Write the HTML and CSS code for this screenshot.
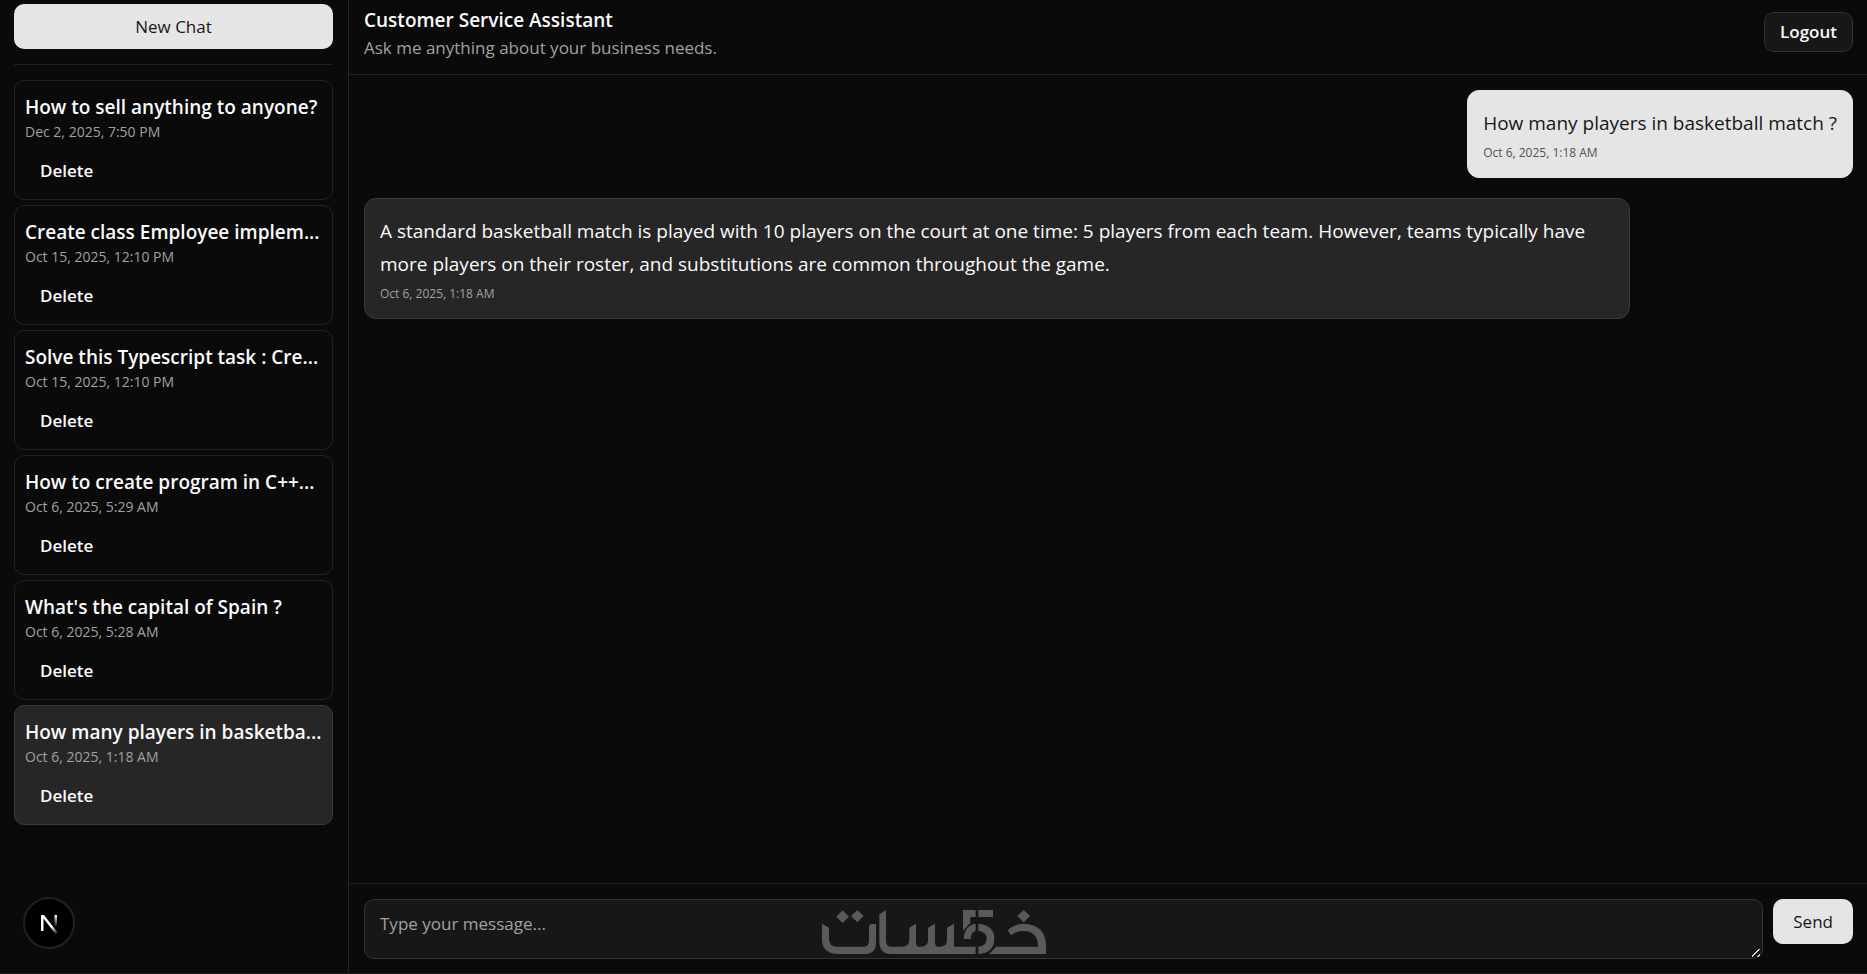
FILE: index.html
```html
<!DOCTYPE html>
<html lang="en">
<head>
<meta charset="utf-8">
<meta name="viewport" content="width=device-width, initial-scale=1">
<title>Customer Service Assistant</title>
<link rel="stylesheet" href="styles.css">
</head>
<body>
<div class="app">
  <aside class="sidebar">
    <div class="sidebar-top">
      <button class="btn btn-primary btn-block" type="button">New Chat</button>
    </div>
    <ul class="chat-list">
      <li class="chat-card">
        <h2 class="chat-title">How to sell anything to anyone?</h2>
        <time class="chat-date">Dec 2, 2025, 7:50 PM</time>
        <button class="btn btn-ghost" type="button">Delete</button>
      </li>
      <li class="chat-card">
        <h2 class="chat-title">Create class Employee implem...</h2>
        <time class="chat-date">Oct 15, 2025, 12:10 PM</time>
        <button class="btn btn-ghost" type="button">Delete</button>
      </li>
      <li class="chat-card">
        <h2 class="chat-title">Solve this Typescript task : Cre...</h2>
        <time class="chat-date">Oct 15, 2025, 12:10 PM</time>
        <button class="btn btn-ghost" type="button">Delete</button>
      </li>
      <li class="chat-card">
        <h2 class="chat-title">How to create program in C++...</h2>
        <time class="chat-date">Oct 6, 2025, 5:29 AM</time>
        <button class="btn btn-ghost" type="button">Delete</button>
      </li>
      <li class="chat-card">
        <h2 class="chat-title">What's the capital of Spain ?</h2>
        <time class="chat-date">Oct 6, 2025, 5:28 AM</time>
        <button class="btn btn-ghost" type="button">Delete</button>
      </li>
      <li class="chat-card is-active">
        <h2 class="chat-title">How many players in basketba...</h2>
        <time class="chat-date">Oct 6, 2025, 1:18 AM</time>
        <button class="btn btn-ghost" type="button">Delete</button>
      </li>
    </ul>
  </aside>

  <main class="main">
    <header class="header">
      <div>
        <h1 class="header-title">Customer Service Assistant</h1>
        <p class="header-sub">Ask me anything about your business needs.</p>
      </div>
      <button class="btn btn-outline" type="button">Logout</button>
    </header>

    <section class="messages" aria-label="Messages">
      <article class="bubble bubble-user">
        <p class="bubble-text">How many players in basketball match ?</p>
        <time class="bubble-time">Oct 6, 2025, 1:18 AM</time>
      </article>
      <article class="bubble bubble-bot">
        <p class="bubble-text">A standard basketball match is played with 10 players on the court at one time: 5 players from each team. However, teams typically have more players on their roster, and substitutions are common throughout the game.</p>
        <time class="bubble-time">Oct 6, 2025, 1:18 AM</time>
      </article>
    </section>

    <form class="composer">
      <textarea class="composer-input" rows="1" placeholder="Type your message..." aria-label="Message"></textarea>
      <button class="btn btn-primary" type="button">Send</button>
    </form>
  </main>
</div>

<button class="dev-badge" type="button" aria-label="Open Next.js Dev Tools">
  <svg width="52" height="52" viewBox="0 0 52 52" aria-hidden="true">
    <defs>
      <linearGradient id="n-diag" x1="30" y1="29" x2="35" y2="37" gradientUnits="userSpaceOnUse"><stop stop-color="#fff"/><stop offset="1" stop-color="#fff" stop-opacity="0"/></linearGradient>
      <linearGradient id="n-stem" x1="33" y1="18" x2="33" y2="30" gradientUnits="userSpaceOnUse"><stop stop-color="#fff"/><stop offset="1" stop-color="#fff" stop-opacity="0"/></linearGradient>
    </defs>
    <circle cx="26" cy="26" r="25" fill="#000" stroke="#212121" stroke-width="2"/>
    <path d="M18 34V18H21L35 36L33 37.500L20.500 21.500V34Z" fill="url(#n-diag)"/>
    <path d="M31.500 18H34V30H31.500Z" fill="url(#n-stem)"/>
  </svg>
</button>

<svg class="watermark" width="224" height="46" viewBox="63 60 672 138" role="img" aria-label="خمسات">
  <g fill="#5a5a5a">
    <path d="M125 61L144 80L125 99L106 80Z"/>
    <path d="M169 60L188 78L169 97L150 78Z"/>
    <path d="M668 60L687 78L668 97L649 78Z"/>
    <path d="M63 101L84 113V147Q84 170 108 170H186Q204 170 204 152V108L210 102H225V158Q225 192 190 192H112Q63 192 63 148Z"/>
    <path d="M235 73L255 60V152Q255 170 271 170H305Q325 168 325 150V113L345 101V158Q345 166 351 170H362Q381 168 381 150V113L402 101V158Q402 166 408 170H419Q438 168 438 150V113L459 101V170H524V192H270Q235 192 235 154Z"/>
    <path d="M486 60H524V81H508V99L486 123Z"/>
    <path d="M532 60H576V81H532Z"/>
    <path d="M488 147Q490 106 524 101V122Q509 127 509 147Z"/>
    <path d="M532 101Q580 105 580 146Q580 188 532 192V170Q557 168 557 146Q557 125 532 122Z"/>
    <path d="M565 192L585 170H711V165Q708 124 668 123Q645 123 630 136L620 121Q640 101 668 101Q733 104 735 165V192Z"/>
  </g>
</svg>
</body>
</html>
```
FILE: styles.css
```css
* {
  box-sizing: border-box;
}

body {
  margin: 0;
  background: #0a0a0a;
  color: #fafafa;
  font-family: "Open Sans", "Noto Sans", sans-serif;
  font-size: 17px;
}

h1, h2, p, ul {
  margin: 0;
  padding: 0;
}

.app {
  display: grid;
  grid-template-columns: 349px 1fr;
  height: 100vh;
  border-bottom: 1px solid #1c1820;
}

.btn {
  border: 0;
  border-radius: 10px;
  font: inherit;
  font-weight: 600;
  line-height: 24px;
  color: #fafafa;
  background: transparent;
  cursor: pointer;
}

.btn-primary {
  height: 45px;
  padding: 0 20px;
  background: #e5e5e5;
  color: #171717;
  font-weight: 500;
}

.btn-block {
  width: 100%;
}

.btn-ghost {
  height: 40px;
  padding: 0 15px;
}

.btn-outline {
  height: 40px;
  padding: 0 15px;
  background: #171717;
  border: 1px solid #343434;
}

.sidebar {
  min-height: 0;
  padding: 4px 15px 15px 14px;
  border-right: 1px solid #262626;
}

.sidebar-top {
  padding-bottom: 15px;
  border-bottom: 1px solid #222;
}

.chat-list {
  display: flex;
  flex-direction: column;
  gap: 5px;
  margin-top: 15px;
  list-style: none;
}

.chat-card {
  display: flex;
  flex-direction: column;
  align-items: flex-start;
  padding: 12px 10px 8px;
  border: 1px solid #232323;
  border-radius: 10px;
}

.chat-card.is-active {
  background: #262626;
  border-color: #3a3a3a;
}

.chat-title {
  font-size: 19px;
  line-height: 28px;
  font-weight: 600;
  white-space: nowrap;
}

.chat-date {
  margin-bottom: 8px;
  font-size: 14px;
  line-height: 22px;
  color: #a1a1a1;
}

.main {
  display: flex;
  flex-direction: column;
  min-width: 0;
  min-height: 0;
}

.header {
  display: flex;
  align-items: center;
  justify-content: space-between;
  padding: 4px 14px 14px 15px;
  border-bottom: 1px solid #222;
}

.header-title {
  font-size: 19px;
  line-height: 32px;
  font-weight: 600;
}

.header-sub {
  font-size: 17px;
  line-height: 24px;
  color: #a1a1a1;
}

.messages {
  flex: 1;
  display: flex;
  flex-direction: column;
  align-items: flex-start;
  gap: 20px;
  min-height: 0;
  padding: 15px 14px 15px 15px;
}

.bubble {
  max-width: 85%;
  padding: 16px 15px 14px;
  border: 1px solid #3a3a3a;
  border-radius: 12px;
  background: #262626;
}

.bubble-user {
  align-self: flex-end;
  border-color: #e5e5e5;
  background: #e5e5e5;
  color: #171717;
}

.bubble-text {
  font-size: 19px;
  line-height: 33px;
}

.bubble-time {
  display: block;
  margin-top: 2px;
  font-size: 12px;
  line-height: 21px;
  color: #a1a1a1;
}

.bubble-user .bubble-time {
  color: #525252;
}

.composer {
  display: flex;
  align-items: flex-start;
  gap: 10px;
  padding: 15px 14px 14px 15px;
  border-top: 1px solid #222;
}

.composer-input {
  flex: 1;
  height: 60px;
  padding: 10px 15px;
  border: 1px solid #343434;
  border-radius: 10px;
  background: #171717;
  color: #fafafa;
  font: inherit;
  line-height: 28px;
}

.composer-input::placeholder {
  color: #a1a1a1;
}

.composer-input::-webkit-resizer {
  background: linear-gradient(135deg, transparent 42%, #d4d4d4 42%, #d4d4d4 56%, transparent 56%, transparent 78%, #d4d4d4 78%, #d4d4d4 90%, transparent 90%) right 2px bottom 1px / 8px 8px no-repeat;
}

.dev-badge {
  position: fixed;
  left: 23px;
  bottom: 25px;
  padding: 0;
  border: 0;
  background: none;
  line-height: 0;
}

.watermark {
  position: fixed;
  left: 50%;
  bottom: 18px;
  transform: translateX(-50%);
  pointer-events: none;
}
```
